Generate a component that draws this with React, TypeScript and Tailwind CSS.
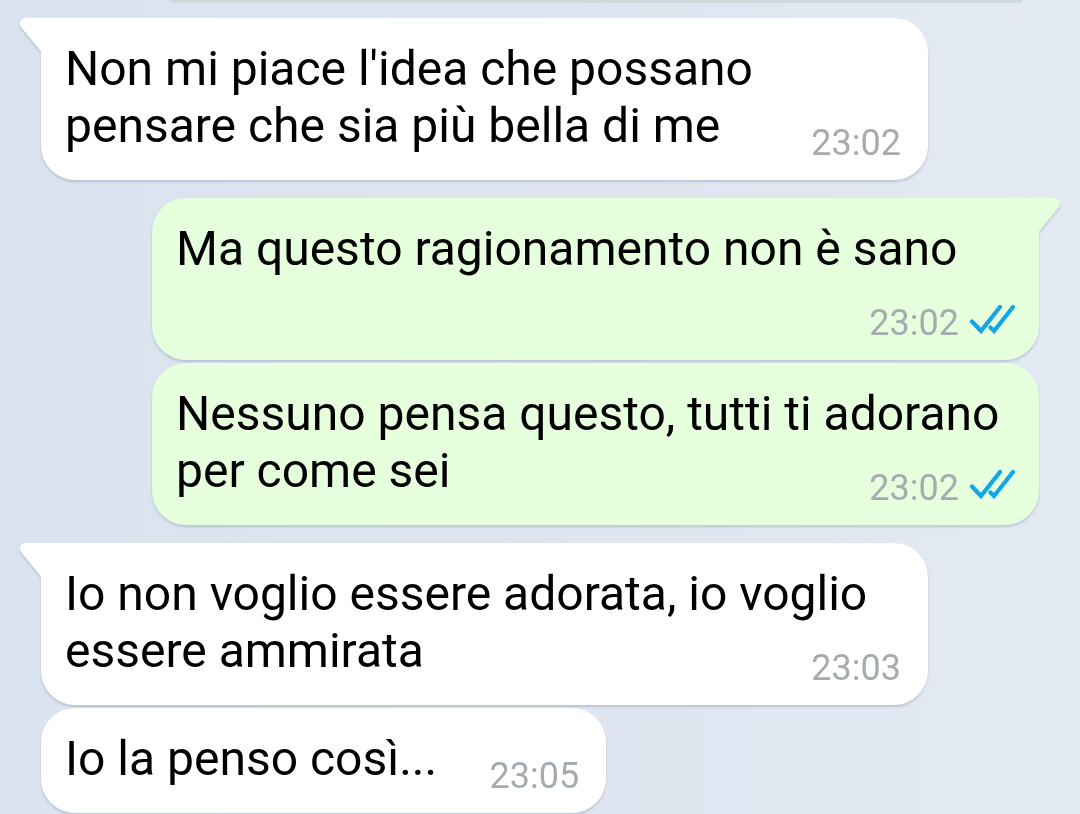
import clsx from 'clsx'

interface Message {
  id: number
  text: string
  time: string
  own?: boolean
  // first message of a group carries the tail
  first?: boolean
}

const messages: Message[] = [
  { id: 1, text: "Non mi piace l'idea che possano pensare che sia più bella di me", time: '23:02', first: true },
  { id: 2, text: 'Ma questo ragionamento non è sano', time: '23:02', own: true, first: true },
  { id: 3, text: 'Nessuno pensa questo, tutti ti adorano per come sei', time: '23:02', own: true },
  { id: 4, text: 'Io non voglio essere adorata, io voglio essere ammirata', time: '23:03', first: true },
  { id: 5, text: 'Io la penso così...', time: '23:05' },
]

function Tail({ own }: { own?: boolean }) {
  return (
    <svg
      aria-hidden="true"
      viewBox="0 0 22 34"
      className={clsx(
        'absolute top-0 h-[34px] w-[22px]',
        own ? 'left-full -ml-px -scale-x-100 text-[#e6ffdc]' : 'right-full -mr-px text-white',
      )}
    >
      <path d="M22 0H5C1 0-1.2 4.4 0.6 8.2C1 9 1.5 9.6 2 10.2L21 33.5H22Z" fill="currentColor" />
    </svg>
  )
}

function DoubleCheck() {
  return (
    <svg role="img" aria-label="Letto" viewBox="0 0 46 32" className="h-8 w-[46px]">
      <g fill="none" stroke="#12a5e8" strokeWidth="4.2" strokeLinecap="round">
        <path d="M3 19.5L12 29L31 5" />
        <path d="M21.5 25.5L25 29L44 5" />
      </g>
    </svg>
  )
}

function Bubble({ message }: { message: Message }) {
  const { text, time, own, first } = message

  return (
    <li
      className={clsx(
        'relative grid w-fit max-w-[calc(100%-111px)] rounded-[34px] pl-6 drop-shadow-[0_2px_1px_rgba(90,110,140,0.28)]',
        own ? 'self-end bg-[#e6ffdc] pr-6' : 'self-start bg-white pr-[27px]',
        first && (own ? 'rounded-tr-none' : 'rounded-tl-none'),
        first ? 'mt-[18px] first:mt-0' : 'mt-[3px]',
      )}
    >
      {first && <Tail own={own} />}
      <p className="col-start-1 row-start-1 pt-[22px] pb-[26px] text-[48px] leading-[57px] text-black">
        {text}
        {/* Keeps the last line clear of the time */}
        <span aria-hidden="true" className="inline-block w-[142px]" />
      </p>
      <div className="col-start-1 row-start-1 mb-4 flex items-start gap-2.5 self-end justify-self-end text-[36px] leading-[42px] text-[#a5acaf]">
        <time>{time}</time>
        {own && <DoubleCheck />}
      </div>
    </li>
  )
}

export default function App() {
  return (
    <main className="min-h-screen overflow-hidden bg-linear-to-r from-[#dae3ef] via-[#dee5f0] to-[#e3eaf3] px-[41px] pb-px font-[Roboto,sans-serif]">
      {/* Bottom edge of the message scrolled out above */}
      <div className="mr-4 mb-[15px] ml-[128px] h-[3px] rounded-b-full bg-[#cfdadc]" />
      <ul className="flex flex-col">
        {messages.map((message) => (
          <Bubble key={message.id} message={message} />
        ))}
      </ul>
    </main>
  )
}
